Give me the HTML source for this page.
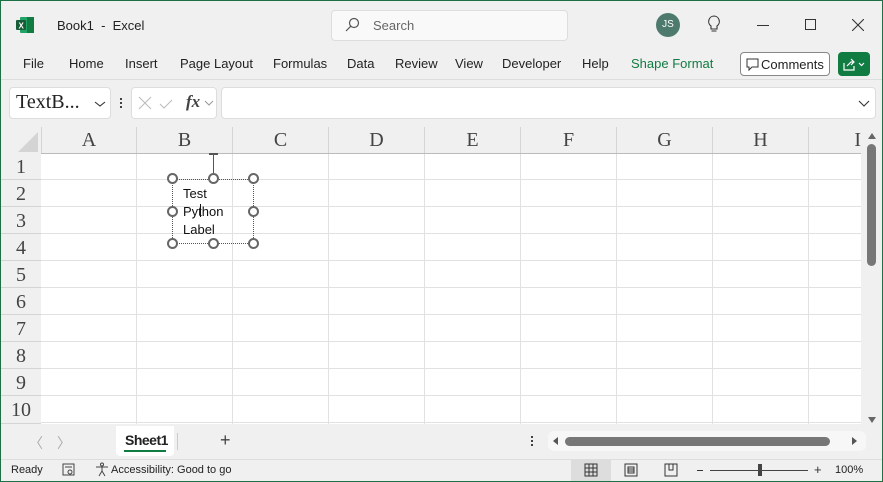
<!DOCTYPE html>
<html><head><style>
*{margin:0;padding:0;box-sizing:border-box}
body{width:883px;height:482px;overflow:hidden;background:#f0f0f0;font-family:"Liberation Sans",sans-serif;position:relative;font-size:13px;color:#222}
.a{position:absolute}
.frame{left:0;top:0;width:883px;height:482px;border:1px solid #1e7145;pointer-events:none;z-index:50}
.tab{top:56px;font-size:13px;color:#222}
.col{top:127px;height:27px;border-right:1px solid #d4d4d4;font-family:"Liberation Serif",serif;font-size:20px;color:#444;text-align:center;line-height:27px}
.rn{left:1px;width:40px;height:27px;font-family:"Liberation Serif",serif;font-size:20px;color:#444;text-align:center;line-height:29px;border-bottom:1px solid #d4d4d4;background:#f0f0f0}
.h{width:11px;height:11px;border:2px solid #666;border-radius:50%;background:#fff}
</style></head><body>
<div class="a frame"></div>
<svg class="a" style="left:16px;top:17px" width="18" height="16"><rect x="4" y="0" width="14" height="16" rx="1" fill="#21a366"/><rect x="11" y="0" width="7" height="16" fill="#107c41"/><rect x="0" y="3" width="10" height="10" rx="1" fill="#185c37"/><text x="2.5" y="11.5" font-size="8" fill="#fff" font-weight="bold" font-family="Liberation Sans">X</text></svg>
<div class="a" style="left:57px;top:18px;font-size:13px">Book1&nbsp; -&nbsp; Excel</div>
<div class="a" style="left:331px;top:10px;width:237px;height:31px;background:#f9f9f9;border:1px solid #ddd;border-radius:4px"></div>
<svg class="a" style="left:344px;top:17px" width="16" height="16"><circle cx="10" cy="6" r="4.5" fill="none" stroke="#555" stroke-width="1.2"/><line x1="6.8" y1="9.2" x2="2" y2="14" stroke="#555" stroke-width="1.2"/></svg>
<div class="a" style="left:373px;top:18px;color:#666">Search</div>
<div class="a" style="left:656px;top:13px;width:24px;height:24px;border-radius:50%;background:#4e7a6e;color:#fff;font-size:10px;text-align:center;line-height:24px">JS</div>
<svg class="a" style="left:706px;top:15px" width="16" height="20"><path d="M8 1a5.5 5.5 0 0 0-3 10v3h6v-3a5.5 5.5 0 0 0-3-10z" fill="none" stroke="#333" stroke-width="1.1"/><line x1="5.5" y1="16" x2="10.5" y2="16" stroke="#333"/></svg>
<div class="a" style="left:757px;top:25px;width:12px;height:1px;background:#333"></div>
<div class="a" style="left:805px;top:19px;width:11px;height:11px;border:1px solid #333"></div>
<svg class="a" style="left:852px;top:19px" width="12" height="12"><path d="M0 0L12 12M12 0L0 12" stroke="#333" stroke-width="1.1"/></svg>
<div class="a tab" style="left:23px">File</div>
<div class="a tab" style="left:69px">Home</div>
<div class="a tab" style="left:125px">Insert</div>
<div class="a tab" style="left:180px">Page Layout</div>
<div class="a tab" style="left:273px">Formulas</div>
<div class="a tab" style="left:347px">Data</div>
<div class="a tab" style="left:395px">Review</div>
<div class="a tab" style="left:455px">View</div>
<div class="a tab" style="left:502px">Developer</div>
<div class="a tab" style="left:582px">Help</div>
<div class="a tab" style="left:631px;color:#107c41">Shape Format</div>
<div class="a" style="left:740px;top:52px;width:90px;height:24px;border:1px solid #888;border-radius:4px;background:#fff"></div>
<svg class="a" style="left:746px;top:58px" width="14" height="13"><path d="M1 1h11v8H6l-3 3V9H1z" fill="none" stroke="#333"/></svg>
<div class="a" style="left:761px;top:57px;font-size:13px">Comments</div>
<div class="a" style="left:838px;top:52px;width:32px;height:24px;background:#107c41;border-radius:4px"></div>
<svg class="a" style="left:842px;top:57px" width="25" height="14"><path d="M2 6v7h10V9M5 9l4-4h3M9 2l3 3-3 3" fill="none" stroke="#fff" stroke-width="1.2"/><path d="M17 6l2.5 2.5L22 6" fill="none" stroke="#fff" stroke-width="1.2"/></svg>
<div class="a" style="left:0;top:79px;width:883px;height:1px;background:#ddd"></div>
<div class="a" style="left:9px;top:87px;width:102px;height:32px;background:#fff;border:1px solid #ddd;border-radius:4px"></div>
<div class="a" style="left:16px;top:91px;font-family:'Liberation Serif',serif;font-size:20px">TextB...</div>
<svg class="a" style="left:94px;top:100px" width="12" height="8"><path d="M1 2l5 4 5-4" fill="none" stroke="#333" stroke-width="1.1"/></svg>
<div class="a" style="left:120px;top:97px;width:2px;height:12px;background:radial-gradient(circle,#333 1px,transparent 1.2px) 0 0/2px 4px"></div>
<div class="a" style="left:131px;top:87px;width:86px;height:32px;background:#fff;border:1px solid #ddd;border-radius:4px"></div>
<svg class="a" style="left:138px;top:96px" width="40" height="14"><path d="M1 1l12 12M13 1L1 13" stroke="#bbb" stroke-width="1"/><path d="M22 8l4 4 8-8" fill="none" stroke="#bbb"/></svg>
<div class="a" style="left:186px;top:92px;font-family:'Liberation Serif',serif;font-style:italic;font-size:17px;font-weight:bold;color:#444">fx</div>
<svg class="a" style="left:204px;top:100px" width="10" height="7"><path d="M1 1l4 4 4-4" fill="none" stroke="#999"/></svg>
<div class="a" style="left:221px;top:87px;width:655px;height:32px;background:#fff;border:1px solid #ddd;border-radius:4px"></div>
<svg class="a" style="left:858px;top:100px" width="12" height="8"><path d="M1 1l5 5 5-5" fill="none" stroke="#333" stroke-width="1.1"/></svg>
<div class="a" style="left:41px;top:153px;width:820px;height:271px;background:#fff;background-image:linear-gradient(to right,#e1e1e1 1px,transparent 1px),linear-gradient(to bottom,transparent 26px,#e1e1e1 26px);background-size:96px 27px,96px 27px;background-position:95px 0,0 0"></div>
<svg class="a" style="left:18px;top:132px" width="20" height="20"><path d="M20 0V20H0z" fill="#d4d4d4"/></svg>
<div class="a col" style="left:41px;width:96px;border-left:1px solid #d4d4d4">A</div>
<div class="a col" style="left:137px;width:96px">B</div>
<div class="a col" style="left:233px;width:96px">C</div>
<div class="a col" style="left:329px;width:96px">D</div>
<div class="a col" style="left:425px;width:96px">E</div>
<div class="a col" style="left:521px;width:96px">F</div>
<div class="a col" style="left:617px;width:96px">G</div>
<div class="a col" style="left:713px;width:96px">H</div>
<div class="a col" style="left:809px;width:52px;text-align:right;border:none">I</div>
<div class="a" style="left:41px;top:153px;width:820px;height:1px;background:#bbb"></div>
<div class="a" style="left:40px;top:153px;width:1px;height:271px;background:#bbb"></div>
<div class="a rn" style="top:153px">1</div>
<div class="a rn" style="top:180px">2</div>
<div class="a rn" style="top:207px">3</div>
<div class="a rn" style="top:234px">4</div>
<div class="a rn" style="top:261px">5</div>
<div class="a rn" style="top:288px">6</div>
<div class="a rn" style="top:315px">7</div>
<div class="a rn" style="top:342px">8</div>
<div class="a rn" style="top:369px">9</div>
<div class="a rn" style="top:396px;height:28px">10</div>
<div class="a" style="left:172px;top:179px;width:82px;height:65px;border:1px dotted #555"></div>
<div class="a" style="left:213px;top:153px;width:1px;height:25px;background:#555"></div>
<div class="a" style="left:209px;top:153px;width:9px;height:2px;background:#555"></div>
<div class="a" style="left:183px;top:185px;font-size:13px;line-height:18px;color:#111">Test<br>Python<br>Label</div>
<div class="a" style="left:200px;top:204px;width:1px;height:13px;background:#111"></div>
<div class="a h" style="left:167px;top:173px"></div><div class="a h" style="left:208px;top:173px"></div><div class="a h" style="left:248px;top:173px"></div>
<div class="a h" style="left:167px;top:206px"></div><div class="a h" style="left:248px;top:206px"></div>
<div class="a h" style="left:167px;top:238px"></div><div class="a h" style="left:208px;top:238px"></div><div class="a h" style="left:248px;top:238px"></div>
<div class="a" style="left:861px;top:127px;width:21px;height:300px;background:#f0f0f0"></div>
<svg class="a" style="left:867px;top:132px" width="10" height="8"><path d="M5 1L9 7H1z" fill="#666"/></svg>
<div class="a" style="left:867px;top:144px;width:9px;height:122px;background:#777;border-radius:5px"></div>
<svg class="a" style="left:867px;top:416px" width="10" height="8"><path d="M5 7L9 1H1z" fill="#666"/></svg>
<div class="a" style="left:29px;top:433px;color:#aaa;font-size:14px">〈</div>
<div class="a" style="left:57px;top:433px;color:#aaa;font-size:14px">〉</div>
<div class="a" style="left:116px;top:426px;width:58px;height:30px;background:#fff;border-radius:0 0 4px 4px"></div>
<div class="a" style="left:125px;top:432px;font-size:14px;font-weight:bold;color:#222;letter-spacing:-0.5px">Sheet1</div>
<div class="a" style="left:124px;top:450px;width:42px;height:2px;background:#107c41"></div>
<div class="a" style="left:177px;top:433px;width:1px;height:17px;background:#ccc"></div>
<div class="a" style="left:220px;top:430px;font-size:18px;color:#444">+</div>
<div class="a" style="left:531px;top:435px;width:2px;height:12px;background:radial-gradient(circle,#333 1px,transparent 1.2px) 0 0/2px 4px"></div>
<div class="a" style="left:548px;top:431px;width:318px;height:20px;background:#f7f7f7;border-radius:6px"></div>
<svg class="a" style="left:552px;top:436px" width="8" height="10"><path d="M6 1v8L1 5z" fill="#555"/></svg>
<div class="a" style="left:565px;top:437px;width:265px;height:9px;background:#777;border-radius:5px"></div>
<svg class="a" style="left:850px;top:436px" width="8" height="10"><path d="M2 1v8l5-4z" fill="#555"/></svg>
<div class="a" style="left:0;top:459px;width:883px;height:1px;background:#ddd"></div>
<div class="a" style="left:11px;top:464px;font-size:11px">Ready</div>
<svg class="a" style="left:62px;top:463px" width="14" height="13"><rect x="1" y="1" width="11" height="11" fill="none" stroke="#444"/><line x1="3" y1="4" x2="10" y2="4" stroke="#444"/><circle cx="8" cy="9" r="2" fill="none" stroke="#444"/></svg>
<svg class="a" style="left:95px;top:462px" width="14" height="15"><circle cx="7" cy="2.5" r="1.5" fill="none" stroke="#444"/><path d="M1 5h12M7 5v4l-3 5M7 9l3 5" fill="none" stroke="#444"/></svg>
<div class="a" style="left:111px;top:464px;font-size:11px">Accessibility: Good to go</div>
<div class="a" style="left:571px;top:460px;width:40px;height:21px;background:#ddd"></div>
<svg class="a" style="left:584px;top:463px" width="14" height="14"><path d="M1 1h12v12H1zM1 5h12M1 9h12M5 1v12M9 1v12" fill="none" stroke="#333"/></svg>
<svg class="a" style="left:624px;top:463px" width="14" height="14"><path d="M1 1h12v12H1zM4 4h6v6H4zM4 6h6M4 8h6" fill="none" stroke="#333"/></svg>
<svg class="a" style="left:664px;top:463px" width="14" height="14"><path d="M1 1h12v12H1zM5 1v6h4V1" fill="none" stroke="#333"/></svg>
<div class="a" style="left:697px;top:470px;width:6px;height:1px;background:#333"></div>
<div class="a" style="left:710px;top:470px;width:98px;height:1px;background:#444"></div>
<div class="a" style="left:758px;top:464px;width:4px;height:12px;background:#444"></div>
<div class="a" style="left:814px;top:462px;font-size:13px;color:#333">+</div>
<div class="a" style="left:835px;top:464px;font-size:11px">100%</div>
</body></html>
